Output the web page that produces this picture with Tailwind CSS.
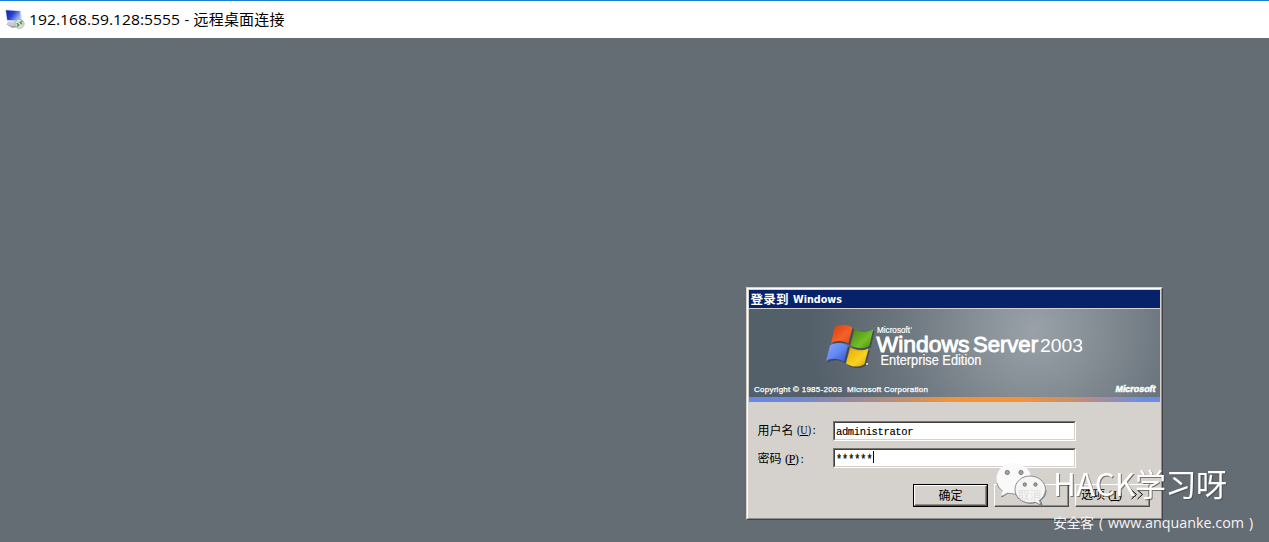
<!DOCTYPE html>
<html lang="zh-CN">
<head>
<meta charset="utf-8">
<title>192.168.59.128:5555 - 远程桌面连接</title>
<script src="https://cdn.jsdelivr.net/npm/@tailwindcss/browser@4"></script>
</head>
<body class="relative flex h-[542px] w-[1269px] flex-col overflow-hidden bg-[#646c74] text-black">
<header class="flex h-[38px] shrink-0 items-center border-t border-[#1a7fd4] bg-white pl-1">
  <svg class="mr-[3px] h-[22px] w-[22px] -translate-y-px" viewBox="0 0 22 22">
    <defs><linearGradient id="scr" x1="0" y1="0" x2="1" y2=".5"><stop offset="0" stop-color="#0d1fa8"/><stop offset=".5" stop-color="#2343cf"/><stop offset="1" stop-color="#9fb8ee"/></linearGradient></defs>
    <path d="M1 1.5 17 2.5 18 14 3 13.5Z" fill="#d3dae6"/>
    <path d="M2 2.3 16 3.3 16.8 12.7 3.3 12Z" fill="url(#scr)"/>
    <path d="M4 14h9l1 2 3 3-9 .5-6-3z" fill="#c9ced6"/>
    <path d="M3 16.5 8 18l8-.5v1.5l-8 .7z" fill="#9aa1ab"/>
    <circle cx="15.5" cy="15.8" r="4.6" fill="#d9e2d8" stroke="#a2aca4" stroke-width=".8"/>
    <path d="m12.8 15.3 2 1.7-1.8 1.6M18.2 13l-2 1.5 1.9 1.7" fill="none" stroke="#3c9a4a" stroke-width="1.3"/>
  </svg>
  <svg class="h-[30px] w-[262px] -translate-y-px" viewBox="0 0 262 30">
    <text x="0" y="20.5" font-family="Open Sans" font-size="14.5" textLength="151" lengthAdjust="spacingAndGlyphs">192.168.59.128:5555</text>
    <text x="155.500" y="20.500" font-family="Open Sans" font-size="14.500">-</text>
    <text x="164.500" y="20.500" font-family="Noto Sans CJK SC, sans-serif" font-size="15" textLength="91">远程桌面连接</text>
  </svg>
</header>

<main class="absolute left-[746px] top-[287px] flex h-[233px] w-[417px] flex-col border border-t-[#d4d0c8] border-r-[#404347] border-b-[#404347] border-l-[#d4d0c8] bg-[#d5d2cd]">
  <div class="flex h-full flex-col border border-t-white border-r-[#918e89] border-b-[#918e89] border-l-white px-px pt-px">
    <svg class="h-[18px] w-full shrink-0 bg-[#08226a]" viewBox="0 0 411 18" preserveAspectRatio="none">
      <text x="1.500" y="13.500" font-family="Noto Sans CJK SC, sans-serif" font-weight="700" font-size="12.500" fill="#fff" textLength="38">登录到</text>
      <text x="44" y="13" font-family="DejaVu Sans, sans-serif" font-weight="700" font-size="11" fill="#fff" textLength="49" lengthAdjust="spacingAndGlyphs">Windows</text>
    </svg>
    <svg class="mt-px h-[88px] w-full shrink-0" viewBox="749 309 411 88" preserveAspectRatio="none">
      <defs>
        <radialGradient id="glow" gradientUnits="userSpaceOnUse" cx="1034" cy="330" r="225"><stop offset="0" stop-color="#9aa1a9"/><stop offset=".28" stop-color="#858e95"/><stop offset=".62" stop-color="#6a747c"/><stop offset="1" stop-color="#535f69"/></radialGradient>
        <linearGradient id="lr" x1="0" y1="0" x2="1" y2="1"><stop offset="0" stop-color="#d83c10"/><stop offset=".6" stop-color="#f4622a"/><stop offset="1" stop-color="#d94712"/></linearGradient>
        <linearGradient id="lg" x1="0" y1="0" x2="1" y2="1"><stop offset="0" stop-color="#3e8a12"/><stop offset=".6" stop-color="#77bd25"/><stop offset="1" stop-color="#428f12"/></linearGradient>
        <linearGradient id="lb" x1="0" y1="0" x2="1" y2="1"><stop offset="0" stop-color="#87a7fa"/><stop offset=".5" stop-color="#6389f3"/><stop offset="1" stop-color="#3153ca"/></linearGradient>
        <linearGradient id="ly" x1="0" y1="0" x2="1" y2="1"><stop offset="0" stop-color="#e5a400"/><stop offset=".6" stop-color="#f8d322"/><stop offset="1" stop-color="#d59d00"/></linearGradient>
        <g id="flag"><path d="M834.500 327.500C840 323.500 847 324 852.500 327.500L848.500 343.500C843 340.500 837 340 831 343.500Z"/><path d="M854.800 329.500C860 332.500 867 333.500 873.300 329L869.300 346C863.500 349.500 856.500 348.500 850.800 345.500Z"/><path d="M830 345.500C836 342 842.500 342.500 848 345.800L844 362C838.500 358.500 832 357.500 826 361Z"/><path d="M850.300 347.500C856 350.700 862.500 351.500 868.500 348.500L864.500 364C858.500 368 851.500 367 846 363.500Z"/></g>
      </defs>
      <rect x="749" y="309" width="411" height="88" fill="url(#glow)"/>
      <use href="#flag" x="1.500" y="1.500" fill="#35393b" opacity=".65"/>
      <path fill="url(#lr)" d="M834.500 327.500C840 323.500 847 324 852.500 327.500L848.500 343.500C843 340.500 837 340 831 343.500Z"/>
      <path fill="url(#lg)" d="M854.800 329.500C860 332.500 867 333.500 873.300 329L869.300 346C863.500 349.500 856.500 348.500 850.800 345.500Z"/>
      <path fill="url(#lb)" d="M830 345.500C836 342 842.500 342.500 848 345.800L844 362C838.500 358.500 832 357.500 826 361Z"/>
      <path fill="url(#ly)" d="M850.300 347.500C856 350.700 862.500 351.500 868.500 348.500L864.500 364C858.500 368 851.500 367 846 363.500Z"/>
      <circle cx="867" cy="364" r=".9" fill="#fff"/>
      <g fill="#fff" font-family="Liberation Sans, sans-serif">
        <text x="877" y="333" font-size="9" stroke="#fff" stroke-width=".2" textLength="33" lengthAdjust="spacingAndGlyphs">Microsoft</text>
        <circle cx="911.300" cy="328" r=".7"/>
        <text x="876.500" y="352" font-size="22.500" stroke="#fff" stroke-width=".9" textLength="93" lengthAdjust="spacingAndGlyphs">Windows</text>
        <text x="973" y="352" font-size="22.500" stroke="#fff" stroke-width=".9" textLength="65" lengthAdjust="spacingAndGlyphs">Server</text>
        <text x="1040" y="352" font-size="19" textLength="43" lengthAdjust="spacingAndGlyphs">2003</text>
        <text x="880.500" y="365" font-size="14" stroke="#fff" stroke-width=".2" textLength="101" lengthAdjust="spacingAndGlyphs">Enterprise Edition</text>
        <text x="754" y="392" font-size="8" stroke="#fff" stroke-width=".25" textLength="88">Copyright © 1985-2003</text>
        <text x="847" y="392" font-size="8" stroke="#fff" stroke-width=".25" textLength="81">Microsoft Corporation</text>
        <text x="1115.500" y="391.500" font-size="9" font-weight="700" font-style="italic" stroke="#fff" stroke-width=".5" textLength="40" lengthAdjust="spacingAndGlyphs">Microsoft</text>
      </g>
    </svg>
    <div class="h-[5px] shrink-0 bg-[linear-gradient(90deg,#6788e8_0%,#7187ce_12%,#b08c86_32%,#f69435_50%,#f69435_66%,#c68d72_80%,#6d8ce8_96%)]"></div>
    <form class="flex flex-col">
      <div class="mt-[19px] flex h-5 items-center">
        <svg class="h-5 w-[84px] shrink-0" viewBox="749 421 84 20">
          <text x="757.500" y="434.500" font-family="Noto Sans CJK SC, sans-serif" font-size="12" textLength="36">用户名</text>
          <text x="797" y="433.500" font-family="Liberation Serif, serif" font-size="12.500" textLength="14" lengthAdjust="spacingAndGlyphs">(U)</text><text x="812.500" y="433.500" font-family="Liberation Serif" font-size="12">:</text>
          <path d="M800 435.500h8" stroke="#000"/>
        </svg>
        <div class="flex h-5 w-[243px] items-center border border-t-[#77746f] border-r-white border-b-white border-l-[#77746f]">
          <div class="flex h-full w-full items-center border-t border-r border-b border-l border-t-[#404040] border-r-[#d5d2cd] border-b-[#d5d2cd] border-l-[#404040] bg-white pl-px">
            <svg class="h-4 w-[90px]" viewBox="0 0 90 16"><text x="0" y="11.500" font-family="Liberation Mono, monospace" font-size="10.500" stroke="#000" stroke-width=".15" textLength="77.500">administrator</text></svg>
          </div>
        </div>
      </div>
      <div class="mt-[7px] flex h-5 items-center">
        <svg class="h-5 w-[84px] shrink-0" viewBox="749 448 84 20">
          <text x="757.500" y="463" font-family="Noto Sans CJK SC, sans-serif" font-size="12" textLength="24">密码</text>
          <text x="785" y="462.500" font-family="Liberation Serif, serif" font-size="12.500" textLength="14">(P)</text><text x="800.500" y="462.500" font-family="Liberation Serif" font-size="12">:</text>
          <path d="M788 464.500h7" stroke="#000"/>
        </svg>
        <div class="flex h-5 w-[243px] items-center border border-t-[#77746f] border-r-white border-b-white border-l-[#77746f]">
          <div class="flex h-full w-full items-center border-t border-r border-b border-l border-t-[#404040] border-r-[#d5d2cd] border-b-[#d5d2cd] border-l-[#404040] bg-white pl-px">
            <svg class="h-4 w-[90px]" viewBox="0 0 90 16"><text x="0" y="12.500" font-family="Liberation Mono, monospace" font-size="13" stroke="#000" stroke-width=".3" textLength="36.500" lengthAdjust="spacingAndGlyphs">******</text><path d="M37.500 1v12" stroke="#000"/></svg>
          </div>
        </div>
      </div>
      <div class="mt-4 flex gap-[6px] pl-[164px] font-['Noto_Sans_CJK_SC',sans-serif] text-[12px] leading-[17px]">
        <button type="button" class="h-[23px] w-[75px] border border-black">
          <span class="flex h-full justify-center border border-t-white border-r-[#55534f] border-b-[#55534f] border-l-white shadow-[inset_-1px_-1px_#918e89]">确定</span>
        </button>
        <button type="button" class="flex h-[23px] w-[75px] justify-center border border-t-white border-r-[#504e4b] border-b-[#504e4b] border-l-white pt-px pr-1 text-[#333] shadow-[inset_-1px_-1px_#918e89]">取消</button>
        <button type="button" class="h-[23px] w-[75px] border border-t-white border-r-[#504e4b] border-b-[#504e4b] border-l-white shadow-[inset_-1px_-1px_#918e89]">
          <svg class="h-[21px] w-[73px]" viewBox="1076 485 73 21">
            <text x="1081" y="499" font-size="12" textLength="24">选项</text>
            <text x="1108" y="498.500" font-family="Liberation Serif" font-size="12.500" textLength="14">(I)</text><path d="M1111 500.500h8" stroke="#000"/>
            <path d="m1131.500 490 5 4.500-5 4.500m6-9 5 4.500-5 4.500" fill="none" stroke="#000"/>
          </svg>
        </button>
      </div>
    </form>
  </div>
</main>

<svg class="absolute left-[990px] top-[455px] h-[87px] w-[279px]" viewBox="990 455 279 87">
  <path fill="none" stroke="#5d6063" stroke-opacity=".8" d="M997 483c1 4 3 6 6 8l-1.200 6 6.200-4 8 1.200M1046 490c0 5-2 8-5.500 10.500l1.500 4.500-6-2.600c-7 2-16-.4-19.500-7.400"/>
  <path fill="#fafafa" fill-opacity=".97" d="M1014 463c-10 0-17.500 7-17.500 15.500 0 5 2.500 9 6 12l-1.500 5.500 6.500-3.500c2 .7 4.300 1 6.500 1 .6 0 1.200 0 1.800-.1-2.300-8 3.200-17.400 15.200-17.400-1.500-7-8.500-13-17-13z"/>
  <path fill="#fafafa" fill-opacity=".86" stroke="#74777a" stroke-width=".8" d="M1030 476c-8.500 0-15 6-15 13.500s6.500 13.500 15 13.500c1.800 0 3.500-.3 5-.8l6 3-1.500-4.700c3.500-2.500 6-6.500 6-11 0-7.500-7-13.500-15.500-13.500z"/>
  <g fill="#a5a5a3" stroke="#5f6264" stroke-width=".8"><circle cx="1007.300" cy="472.500" r="2.100"/><circle cx="1021" cy="472.500" r="2.100"/><circle cx="1024.800" cy="484.500" r="1.700"/><circle cx="1035.500" cy="484.500" r="1.700"/></g>
  <g font-family="Noto Sans CJK SC, sans-serif" font-size="31" fill="#fff" class="[filter:drop-shadow(1px_1px_0.5px_#444a)]">
    <text x="1053" y="496" textLength="82" lengthAdjust="spacingAndGlyphs">HACK</text>
    <text x="1135" y="496" textLength="92">学习呀</text>
  </g>
  <g fill="#f4f4f4" font-size="14">
    <text x="1053" y="528" font-family="Noto Sans CJK SC, sans-serif" textLength="41">安全客</text>
    <text x="1099" y="527.500" font-family="Open Sans">(</text>
    <text x="1108" y="528" font-family="Open Sans, sans-serif" textLength="136" lengthAdjust="spacingAndGlyphs">www.anquanke.com</text>
    <text x="1249" y="527.500" font-family="Open Sans">)</text>
  </g>
</svg>
</body>
</html>
